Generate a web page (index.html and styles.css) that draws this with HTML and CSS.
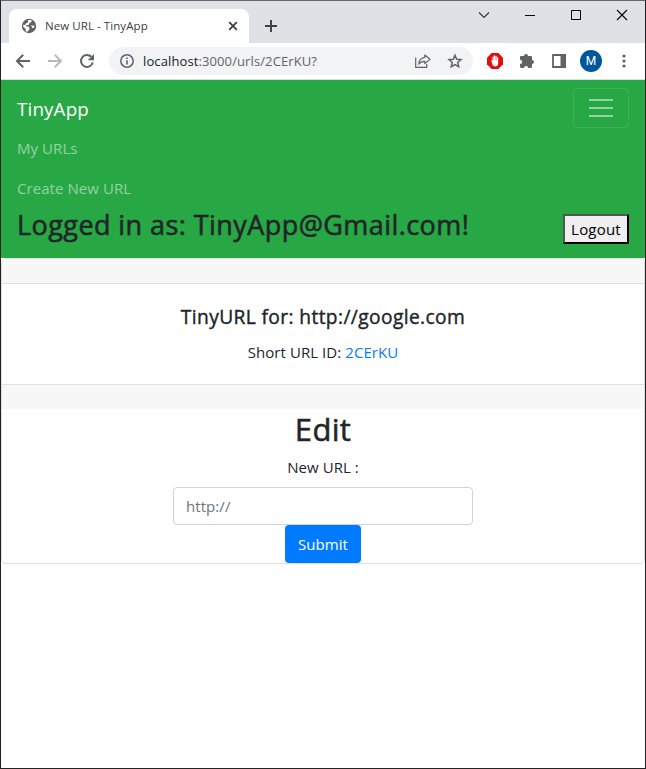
FILE: index.html
```html
<!DOCTYPE html>
<html lang="en">
<head>
<meta charset="utf-8">
<title>New URL - TinyApp</title>
<link rel="stylesheet" href="styles.css">
</head>
<body>
<div class="window">
  <div class="tabstrip">
    <div class="tab">
      <svg class="globe" width="16" height="16" viewBox="0 0 16 16"><circle cx="8" cy="8" r="7.2" fill="#5f6368"/><path d="M7 2.2l3.800-.4-.6 2.200-1.700 1-.6 1.800-2.400.4-.6 1.200 2.600.2 1.200 1.600-.8 1.800-1.600 1.800-1.600-.6-.2-2.400-2.100-1.800-.3-2.200 2 .2.8-1.600 2-.8z" fill="#fff"/><path d="M10 7.600l3.600.2-.6 2-1.600.2z" fill="#fff"/></svg>
      <span class="tab-title">New URL - TinyApp</span>
      <svg width="10" height="10" viewBox="0 0 10 10"><path d="M1.200 1.200l7.600 7.600M8.800 1.200L1.200 8.800" stroke="#3c4043" stroke-width="1.800"/></svg>
    </div>
    <svg class="plus" width="12" height="12" viewBox="0 0 12 12"><path d="M6 0v12M0 6h12" stroke="#3c4043" stroke-width="1.900"/></svg>
    <div class="controls">
      <svg width="46" height="28" viewBox="0 0 46 28"><path d="M18 11.500l5 5 5-5" fill="none" stroke="#333" stroke-width="1.100"/></svg>
      <svg width="46" height="28" viewBox="0 0 46 28"><path d="M18 14.500h10" stroke="#000"/></svg>
      <svg width="46" height="28" viewBox="0 0 46 28"><path d="M18.500 9.500h9v9h-9z" fill="none" stroke="#000"/></svg>
      <svg width="46" height="28" viewBox="0 0 46 28"><path d="M18 9l10 10M28 9L18 19" stroke="#000" stroke-width="1.100"/></svg>
    </div>
  </div>
  <div class="toolbar">
    <svg class="nav-icon" width="16" height="16" viewBox="0 0 16 16"><path d="M15 8H2.200M8.200 1.800L2 8l6.200 6.200" fill="none" stroke="#5f6368" stroke-width="2"/></svg>
    <svg class="nav-icon" width="16" height="16" viewBox="0 0 16 16"><path d="M1 8h12.800M7.800 1.800L14 8l-6.200 6.200" fill="none" stroke="#bababb" stroke-width="2"/></svg>
    <svg class="nav-icon" width="16" height="16" viewBox="0 0 16 16"><path d="M13.800 9.500A6 6 0 1 1 12.300 3.800" fill="none" stroke="#5f6368" stroke-width="2"/><path d="M15 1v6.300H8.700z" fill="#5f6368"/></svg>
    <div class="omnibox">
      <svg width="14" height="14" viewBox="0 0 14 14"><circle cx="7" cy="7" r="6.200" fill="none" stroke="#5f6368" stroke-width="1.500"/><path d="M7 6.200v4.300M7 3.500v1.600" stroke="#5f6368" stroke-width="1.600"/></svg>
      <span class="address"><b>localhost</b>:3000/urls/2CErKU?</span>
      <svg width="16" height="14" viewBox="0 0 16 14"><path d="M.7 3.500v9.800h11V10" fill="none" stroke="#5f6368" stroke-width="1.200"/><path d="M9.800 1l5.200 4.300-5.200 4.300V7.300C7 7.200 5 8.300 3.700 10.200 4 6.700 6 3.800 9.800 3.400z" fill="none" stroke="#5f6368" stroke-width="1.200" stroke-linejoin="round"/></svg>
      <svg class="star" width="16" height="16" viewBox="0 0 16 16"><path d="M8 2.200l1.700 4 4.300.4-3.300 2.900 1 4.200L8 11.500l-3.700 2.200 1-4.200L2 6.600l4.300-.4z" fill="none" stroke="#5f6368" stroke-width="1.500"/></svg>
    </div>
    <svg class="block" width="16" height="16" viewBox="0 0 16 16"><path d="M4.700 0h6.600L16 4.700v6.600L11.300 16H4.700L0 11.300V4.700z" fill="#e40d0d"/><path d="M4.300 7.200c.8-.3 1.100.2 1.200.8V4c0-.9 1.200-.9 1.200 0v3h.3V2.800c0-.9 1.200-.9 1.200 0V7h.3V3.300c0-.9 1.200-.9 1.200 0v4h.3V4.700c0-.9 1.200-.9 1.200 0V10c0 2.400-1.300 3.500-3.100 3.500-1.600 0-2.300-.9-2.800-2.200z" fill="#fff"/></svg>
    <svg class="puzzle" width="16" height="16" viewBox="0 0 16 16"><path d="M1 4.200c0-.7.500-1.200 1.200-1.200H5a2 2 0 1 1 4 0h2.800c.7 0 1.200.500 1.200 1.200V7a2 2 0 1 1 0 4v2.800c0 .7-.5 1.200-1.200 1.200H9.200a2.100 2.100 0 0 0-4.200 0H2.200C1.500 15 1 14.500 1 13.800V11a2.100 2.100 0 0 0 0-4.200z" fill="#5f6368"/></svg>
    <svg class="panel" width="14" height="14" viewBox="0 0 14 14"><path d="M1 1h12v12H1z" fill="none" stroke="#5f6368" stroke-width="1.800"/><path d="M8.500 0H14v14H8.500z" fill="#5f6368"/></svg>
    <span class="avatar">M</span>
    <svg class="dots" width="4" height="14" viewBox="0 0 4 14"><g fill="#5f6368"><circle cx="2" cy="2" r="1.600"/><circle cx="2" cy="7" r="1.600"/><circle cx="2" cy="12" r="1.600"/></g></svg>
  </div>
  <header class="navbar">
    <div class="navbar-top">
      <a class="brand">TinyApp</a>
      <button class="toggler"><svg width="30" height="30" viewBox="0 0 30 30"><path stroke="rgba(255,255,255,.5)" stroke-miterlimit="10" stroke-width="2" d="M3 7h24M3 15h24M3 23h24"/></svg></button>
    </div>
    <a class="nav-link">My URLs</a>
    <a class="nav-link">Create New URL</a>
    <div class="session">
      <h3>Logged in as: TinyApp@Gmail.com!</h3>
      <button class="logout">Logout</button>
    </div>
  </header>
  <main class="card">
    <div class="card-header"></div>
    <div class="card-body">
      <h5>TinyURL for: http://google.com</h5>
      <p>Short URL ID: <a>2CErKU</a></p>
    </div>
    <div class="card-footer"></div>
    <form class="edit">
      <h2>Edit</h2>
      <label for="new-url">New URL :</label>
      <input class="field" id="new-url" type="text" placeholder="http://">
      <button type="button" class="submit">Submit</button>
    </form>
  </main>
</div>
</body>
</html>
```
FILE: styles.css
```css
* { box-sizing: border-box; }
body { margin: 0; font-family: "Open Sans", "Noto Sans", sans-serif; font-size: 15px; letter-spacing: .07px; line-height: 24px; color: #212529; }
svg { display: block; flex: none; }
h2, h3, h5, p { margin: 0; }
button, input { font: inherit; letter-spacing: inherit; }
.window { height: 769px; border: 1px solid #222; border-top-color: #66676b; background: #fff; overflow: hidden; }
.tabstrip { display: flex; height: 42px; background: #dee1e6; padding-left: 8px; }
.tab { display: flex; align-items: center; width: 240px; height: 34px; margin-top: 8px; padding: 0 11px 0 12px; border-radius: 8px 8px 0 0; background: #fff; }
.tab-title { flex: 1; margin-left: 8px; font-size: 11.5px; color: #3c4043; white-space: nowrap; }
.plus { margin: 19px 0 0 16px; }
.controls { display: flex; margin-left: auto; }
.toolbar { display: flex; align-items: center; height: 37px; padding-left: 14px; border-bottom: 1px solid #dadce0; }
.nav-icon { margin-right: 16px; }
.omnibox { display: flex; align-items: center; width: 364px; height: 28px; margin-left: -2px; padding: 0 10px 0 11px; border-radius: 14px; background: #f1f3f4; }
.address { flex: 1; margin-left: 9px; font-size: 13px; color: #5f6368; letter-spacing: .11px; white-space: nowrap; }
.address b { font-weight: 400; color: #202124; }
.star { margin-left: 16px; }
.block { margin-left: 14px; }
.puzzle { margin-left: 16px; }
.panel { margin-left: 17px; }
.avatar { width: 22px; height: 22px; margin-left: 14px; border-radius: 50%; background: #01579b; color: #fff; font: 12px/22px Roboto, sans-serif; text-align: center; }
.dots { margin-left: 20px; }
.navbar { padding: 8px 16px; background: #28a745; }
.navbar-top { display: flex; justify-content: space-between; align-items: center; }
.brand { font-size: 18.8px; line-height: 30px; letter-spacing: .15px; padding-top: 1px; color: #fff; }
.toggler { width: 56px; height: 40px; padding: 4px 12px; border: 1px solid rgba(255,255,255,.1); border-radius: 4px; background: none; }
.nav-link { display: block; height: 40px; padding: 8px 0; color: rgba(255,255,255,.5); }
.session { display: flex; justify-content: space-between; height: 42px; }
h2, h3, h5 { font-weight: 400; -webkit-text-stroke: .55px currentColor; }
h3 { font-size: 27px; line-height: 34px; letter-spacing: .43px; white-space: nowrap; }
.logout { width: 66px; height: 30px; margin-top: 6px; padding: 1px 0; border: 2px outset #000; background: #efefef; color: #000; letter-spacing: .2px; }
.card { border: 1px solid #dfdfdf; border-radius: 4px; text-align: center; overflow: hidden; }
.card-header { height: 25px; background: #f7f7f7; border-bottom: 1px solid #dfdfdf; }
.card-body { height: 100px; padding: 20px; }
h5 { font-size: 19.2px; line-height: 24px; letter-spacing: .38px; padding-top: 1px; margin-bottom: 11px; -webkit-text-stroke-width: .4px; }
.card-body a { color: #007bff; }
.card-footer { height: 25px; background: #f7f7f7; border-top: 1px solid #dfdfdf; }
.edit { display: flex; flex-direction: column; align-items: center; height: 154px; margin: 0; }
h2 { font-size: 31px; line-height: 38px; letter-spacing: .3px; margin: 1px 0 7px; }
label { margin-bottom: 8px; }
.field { flex: none; width: 300px; height: 38px; padding: 6px 12px; border: 1px solid #ced4da; border-radius: 4px; background: #fff; }
.field::placeholder { color: #6c757d; opacity: 1; }
.submit { flex: none; width: 76px; height: 38px; padding: 0; border: 0; border-radius: 4px; background: #007bff; color: #fff; }
```
